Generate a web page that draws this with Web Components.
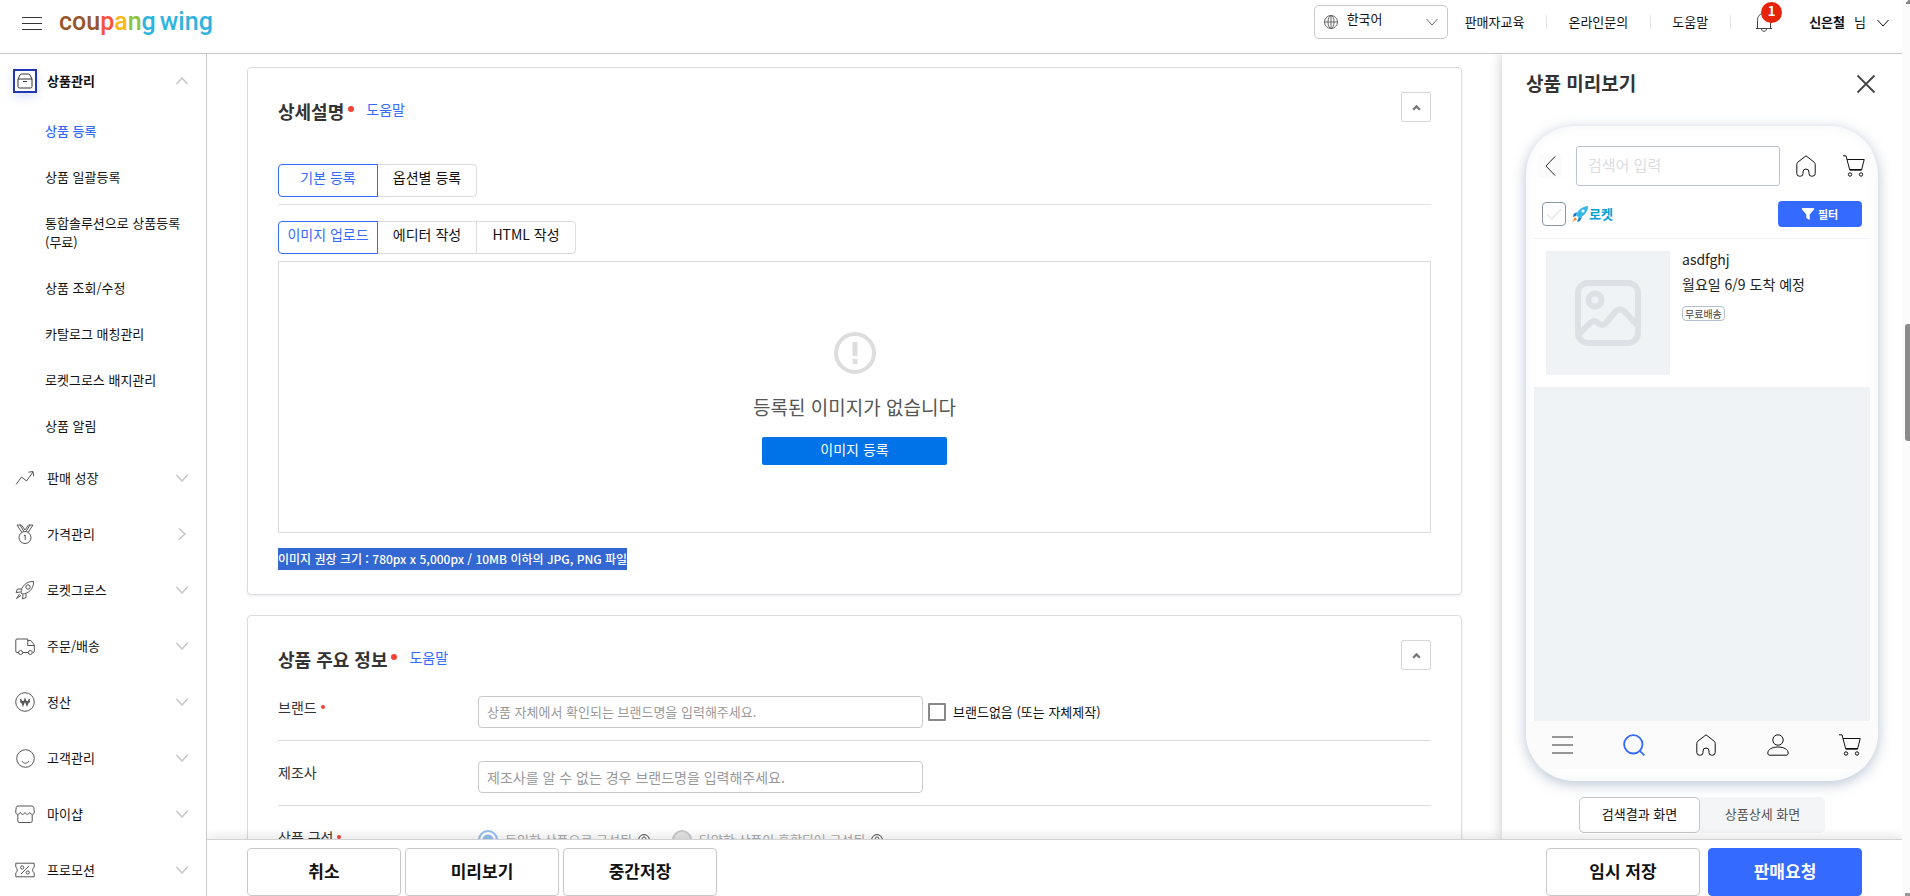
<!DOCTYPE html>
<html lang="ko">
<head>
<meta charset="utf-8">
<meta name="viewport" content="width=device-width, initial-scale=1">
<title>쿠팡 윙 - 상품 등록</title>
<style>
html, body { margin: 0; height: 100%; overflow: hidden; }
body { font-family: "Noto Sans CJK KR", "Noto Sans", sans-serif; font-size: 13px; line-height: 20px; color: #111; background: #fff; }
</style>
</head>
<body>
<wing-app></wing-app>
<script>
const define = (name, html, setup) => {
  const template = document.createElement('template');
  template.innerHTML = '<style>*{box-sizing:border-box}[hidden]{display:none}button,input,select{font:inherit;color:inherit;margin:0}a{color:inherit;text-decoration:none}</style>' + html;
  customElements.define(name, class extends HTMLElement {
    constructor() {
      super();
      this.attachShadow({ mode: 'open' }).append(template.content.cloneNode(true));
    }
    connectedCallback() { if (setup) setup(this, this.shadowRoot); }
  });
};

/* Icons, each in its own view box */
const ICONS = {
  menu: ['0 0 20 14', '<path d="M0 .5h20M0 6.500h20M0 12.500h20"/>'],
  down: ['0 0 12 8', '<path d="M.5 1 6 7l5.500-6"/>'],
  up: ['0 0 12 8', '<path d="M.5 7 6 1l5.500 6"/>'],
  right: ['0 0 8 12', '<path d="M1 .5 7 6 1 11.500"/>'],
  close: ['0 0 18 18', '<path d="m.5.5 17 17m0-17-17 17"/>'],
  back: ['0 0 12 22', '<path d="M11 .5 1 11l10 10.500"/>'],
  caret: ['0 0 8 6', '<path d="M1 5l3-3 3 3"/>'],
  globe: ['0 0 14 14', '<circle cx="7" cy="7" r="6.500"/><ellipse cx="7" cy="7" rx="3" ry="6.500"/><path d="M7 .5v13M.5 7h13"/>'],
  bell: ['0 0 18 21', '<path d="M1 17.500h16M2.500 17.500V9.500C2.500 5 5 2.500 9 2.500s6.500 2.500 6.500 7v8M7.500 2.500V1h3v1.500M6.500 18c.3 1.700 1.200 2.300 2.500 2.300s2.200-.6 2.500-2.300"/>'],
  box: ['0 0 16 16', '<path d="M1 6h14v7.500A1.500 1.500 0 0 1 13.500 15h-11A1.500 1.500 0 0 1 1 13.500zM1 6l2-4a2 2 0 0 1 1.700-1h6.600A2 2 0 0 1 13 2l2 4M6 8.500h4"/>'],
  trend: ['0 0 20 20', '<path d="M1 16.500 6.500 9l5 4 6.500-9M13.500 4.200 18 3.500l.7 4.800"/>'],
  medal: ['0 0 20 20', '<circle cx="10" cy="13.500" r="6"/><path d="m2 1 5 7.500M2 1h4.500L10 6l3.500-5H18l-5 7.500M5 1l4 6.500M15 1l-4 6.500M8.800 12l1.400-1v5"/>'],
  rocket: ['0 0 20 20', '<path d="M6 13C6 7 11 1 18.500 1.500 19 9 13 14 7 14zM6.500 9 2.500 9 1 12.500l4.500-.5M11 13.500v4L7.500 19 8 14.500M4.500 14 1.500 18.500l4.500-3"/><circle cx="13" cy="7" r="2.200"/>'],
  truck: ['0 0 20 20', '<path d="M3.500 16.500H2A1.200 1.200 0 0 1 .8 15.300V4.200A1.200 1.200 0 0 1 2 3h10.800v7M7.800 16.500h5.300M12.800 4.500h3l3.500 4.500v6.300a1.200 1.200 0 0 1-1.300 1.200M12.800 9.500h6.500"/><circle cx="5.600" cy="16.500" r="2"/><circle cx="15.300" cy="16.500" r="2"/>'],
  won: ['0 0 20 20', '<circle cx="10" cy="10" r="9.300"/><path stroke-width="1.500" d="M5.500 7 8 13l2-5.500L12 13l2.500-6M5 9.800h10"/>'],
  smile: ['0 0 20 20', '<circle cx="10.500" cy="10.500" r="8.800"/><path d="M7 13c1.500 3 5.500 3 7 0"/>'],
  shop: ['0 0 20 20', '<path d="M3 2h14a2 2 0 0 1 1.800 1.600L19.300 8c0 3-3.200 3-4.600.5C13.500 11 11.300 11 10 8.500 8.700 11 6.500 11 5.300 8.500 3.900 11 .7 11 .7 8l.5-4.400A2 2 0 0 1 3 2zM2.800 10.500V17A1.500 1.500 0 0 0 4.300 18.500h11.400a1.500 1.500 0 0 0 1.500-1.500v-6.500"/>'],
  coupon: ['0 0 20 20', '<path d="M.8 3.200h18.400v4c-2 .8-2 4.800 0 5.600v4H.8v-4c2-.8 2-4.800 0-5.600zM6 14l8-8"/><circle cx="7.200" cy="7.500" r="1.600"/><circle cx="12.800" cy="12.500" r="1.600"/>'],
  home: ['0 0 20 22', '<path d="M10 .8 1.600 7.400Q.8 8.200.8 9.500V18.600Q.8 21.200 3.500 21.200H4.500Q7 21.200 7 18.600V17a3 3 0 0 1 6 0v1.600q0 2.600 2.500 2.600h1q2.700 0 2.700-2.600V9.500q0-1.300-.8-2.100z"/>'],
  cart: ['0 0 22 22', '<path d="M0 .8h3L6.800 15.200H18.500L21.200 4.500H4M7 14.500h11.800"/><circle cx="7" cy="19.500" r="1.700"/><circle cx="18" cy="19.500" r="1.700"/>'],
  search: ['0 0 22 22', '<circle cx="10.300" cy="10.300" r="9.200"/><path d="m16.300 16.300 5 5"/>'],
  user: ['0 0 22 22', '<circle cx="11" cy="6" r="5.200"/><path d="M11 13c-6 0-10.200 2.500-10.200 6 0 1.500.7 2.200 2 2.200h16.400c1.300 0 2-.7 2-2.200 0-3.500-4.200-6-10.200-6z"/>'],
  bars: ['0 0 21 18', '<path d="M0 1h21M0 9h21M0 17h21"/>'],
  funnel: ['0 0 12 12', '<path fill="currentColor" stroke="none" d="M0 0h12v1.500L7.700 6.500V12L4.300 10V6.500L0 1.500z"/>'],
  check: ['0 0 16 12', '<path d="m.7 6 5 5L15.300 1"/>'],
  alert: ['0 0 44 44', '<circle cx="22" cy="22" r="19"/><path fill="currentColor" stroke="none" d="M19.500 11h5v14h-5zm0 17h5v5h-5z"/>'],
  help: ['0 0 12 12', '<circle cx="6" cy="6" r="5.400"/><path d="M4.200 4.800c0-2.400 3.600-2.400 3.600 0C7.800 6 6 6 6 7.500M6 8.400v1"/>'],
  picture: ['0 0 66 66', '<rect x="3" y="3" width="60" height="60" rx="10"/><circle cx="20" cy="20" r="6.500"/><path d="M3 55 15 43q4-4 8 0t8 0L40 32q5-5 10 0L63 46"/>'],
  ship: ['0 0 16 16', '<path fill="#35b9e9" stroke="none" d="M4 9C6 4 10 .5 16 0 16 6 12 10 7 12z"/><path fill="#1383c5" stroke="none" d="M5 6 1.500 8 1 11l3-1zM10 11l-2 4-3 1 1.500-4z"/><path fill="#ffa03a" stroke="none" d="M3 11 0 16l5-2.500z"/><path fill="#f26a3d" stroke="none" d="m3.500 12-2 2.800 2.800-1.500z"/><circle cx="11" cy="5" r="1.600" fill="#eaffff" stroke="none"/>']
};
define('wing-icon', `<style>
:host{display:block;flex:none;width:var(--w,20px);height:var(--h,var(--w,20px))}
svg{display:block;width:100%;height:100%;fill:none;stroke:currentColor;stroke-width:var(--stroke,1);overflow:visible}
</style><svg aria-hidden="true"></svg>`, (el, root) => {
  const [box, body] = ICONS[el.getAttribute('name')];
  const svg = root.querySelector('svg');
  svg.setAttribute('viewBox', box);
  svg.innerHTML = body;
});

define('wing-logo', `<style>
:host{display:block;font:500 25px/36px Roboto,sans-serif}
a{display:flex;gap:4px}
.c{color:#96562c}.p{color:#f5533d}.a{color:#fcb813}.n{color:#8bc53f}.g{color:#2fb4e0}
</style><a href="#" aria-label="coupang wing"><span><span class="c">cou</span><span class="p">p</span><span class="a">a</span><span class="n">n</span><span class="g">g</span></span><span class="g">wing</span></a>`);

define('wing-header', `<style>
:host{display:flex;align-items:center;height:54px;padding:0 13px 10px 22px;border-bottom:1px solid #c8c8c8;background:#fff}
button{border:0;background:none;padding:0;display:flex;align-items:center}
.menu{margin:4px 17px 0 0;color:#333}
nav{display:flex;align-items:center;margin-left:auto}
.lang{position:relative;display:flex;align-items:center;width:134px;height:34px;margin-right:17px}
.lang select{appearance:none;width:100%;height:100%;padding:0 30px 5px 32px;border:1px solid #c8c8c8;border-radius:5px;background:none;line-height:20px}
.lang wing-icon{position:absolute;pointer-events:none;color:#666}
.globe{left:10px;--w:14px}.arrow{right:10px;--w:12px;--h:8px}
.link{position:relative;padding-right:22px;margin-right:21px;border-right:1px solid #e4e4e4;line-height:14px}
.nav{display:flex;align-items:center}
.bell{position:relative;margin:0 36px 0 3px;color:#444}
.count{position:absolute;left:6px;top:-9px;width:21px;height:21px;border-radius:50%;background:#e52408;color:#fff;font-weight:700;line-height:18px;text-align:center}
.me{gap:9px}
.me wing-icon{margin:2px 0 0 2px}
</style>
<button class="menu" aria-label="메뉴"><wing-icon name="menu" style="--w:20px;--h:14px"></wing-icon></button>
<wing-logo></wing-logo>
<nav>
<div class="lang"><wing-icon class="globe" name="globe"></wing-icon><select aria-label="언어"><option>한국어</option><option>English</option></select><wing-icon class="arrow" name="down"></wing-icon></div>
<div class="nav">
<a class="link" href="#">판매자교육</a><a class="link" href="#">온라인문의</a><a class="link" href="#">도움말</a>
<button class="bell" aria-label="알림"><wing-icon name="bell" style="--w:18px;--h:21px"></wing-icon><span class="count">1</span></button>
<button class="me"><b>신은철</b><span>님</span><wing-icon name="down" style="--w:12px;--h:8px"></wing-icon></button>
</div></nav>`);

define('nav-group', `<style>
:host{display:block}
a{display:flex;align-items:center;height:56px;padding:0 18px 2px 13px}
.icon{display:grid;place-items:center;width:24px;height:24px;margin-right:10px;color:#555}
.chev{margin-left:auto;color:#c4c4c4;display:grid;place-items:center;width:12px}
:host([open]) a{font-weight:700}
:host([open]) .icon{border:2px solid #2437b5;box-shadow:0 4px 10px rgba(80,110,230,.2);color:#333}
</style><a href="#"><span class="icon"></span><slot name="label"></slot><span class="chev"></span></a><slot></slot>`, (el, root) => {
  const open = el.hasAttribute('open'), chev = el.getAttribute('chevron') || (open ? 'up' : 'down');
  root.querySelector('.icon').innerHTML = `<wing-icon name="${el.getAttribute('icon')}" style="--w:${open ? 16 : 20}px"></wing-icon>`;
  root.querySelector('.chev').innerHTML = `<wing-icon name="${chev}" style="--w:${chev === 'right' ? 8 : 12}px;--h:${chev === 'right' ? 12 : 8}px;--stroke:1.4"></wing-icon>`;
});

define('side-nav', `<style>
:host{display:block;width:207px;flex:none;border-right:1px solid #c8c8c8;overflow:hidden;background:#fff}
ul{list-style:none;margin:0;padding:0}
li{padding:11px 20px 16px 45px;line-height:19px}
.on{color:#346aff;font-weight:500}
</style>
<nav-group icon="box" open><span slot="label">상품관리</span>
<ul><li><a class="on" href="#">상품 등록</a></li><li><a href="#">상품 일괄등록</a></li><li><a href="#">통합솔루션으로 상품등록(무료)</a></li><li><a href="#">상품 조회/수정</a></li><li><a href="#">카탈로그 매칭관리</a></li><li><a href="#">로켓그로스 배지관리</a></li><li><a href="#">상품 알림</a></li></ul></nav-group>
<nav-group icon="trend"><span slot="label">판매 성장</span></nav-group>
<nav-group icon="medal" chevron="right"><span slot="label">가격관리</span></nav-group>
<nav-group icon="rocket"><span slot="label">로켓그로스</span></nav-group>
<nav-group icon="truck"><span slot="label">주문/배송</span></nav-group>
<nav-group icon="won"><span slot="label">정산</span></nav-group>
<nav-group icon="smile"><span slot="label">고객관리</span></nav-group>
<nav-group icon="shop"><span slot="label">마이샵</span></nav-group>
<nav-group icon="coupon"><span slot="label">프로모션</span></nav-group>`);

define('form-card', `<style>
:host{display:block;padding:24px 30px;border:1px solid #dcdcdf;border-radius:4px;background:#fff;box-shadow:0 2px 3px rgba(40,50,90,.06)}
header{display:flex;align-items:flex-start;height:35px}
h2{margin:4px 0 0;font-size:18px;line-height:30px;font-weight:700;color:#333}
.dot{width:6px;height:6px;margin:14px 12px 0 4px;border-radius:50%;background:#f44336}
a{margin-top:6px;font-size:14px;line-height:22px;color:#346aff}
button{display:grid;place-items:center;width:30px;height:30px;margin-left:auto;border:1px solid #d5d5da;border-radius:2px;background:#fff;color:#777;padding:0}
</style><header><h2><slot name="title"></slot></h2><span class="dot"></span><a href="#">도움말</a><button aria-label="접기"><wing-icon name="caret" style="--w:9px;--h:7px;--stroke:2"></wing-icon></button></header><slot></slot>`);

define('tab-set', `<style>
:host{display:flex;font-size:14px}
button{width:100px;height:33px;padding:0 0 7px;border:1px solid #dcdcdf;background:#fff;margin-left:-1px;line-height:22px;white-space:nowrap}
button:first-child{margin-left:0;border-radius:4px 0 0 4px}
button:last-child{border-radius:0 4px 4px 0}
.on{border-color:#346aff;color:#346aff;position:relative}
</style><div role="tablist" style="display:flex"></div>`, (el, root) => {
  root.querySelector('div').innerHTML = el.getAttribute('tabs').split('|').map((t, i) => `<button role="tab" aria-selected="${!i}"${i ? '' : ' class="on"'}>${t}</button>`).join('');
});

define('form-row', `<style>
:host{display:flex;align-items:flex-start;padding:20px 0 12px;border-bottom:1px solid #dcdcdf}
.label{display:flex;align-items:center;gap:4px;width:200px;flex:none;font-size:14px;line-height:22px;color:#333}
.dot{display:none;width:4px;height:4px;border-radius:50%;background:#f44336}
:host([required]) .dot{display:block}
.field{display:flex;align-items:center;flex:1;min-width:0}
</style><div class="label"><slot name="label"></slot><span class="dot"></span></div><div class="field"><slot></slot></div>`);

define('product-form', `<style>
:host{display:block;flex:1;min-width:0;overflow:hidden;padding:13px 40px 0}
form-card + form-card{margin-top:20px}
.rule{border:0;border-top:1px solid #e0e3ea;margin:7px 0 16px}
tab-set.mode{margin-top:37px}
.drop{display:flex;flex-direction:column;align-items:center;margin-top:7px;padding:69px 0 67px;border:1px solid #dcdcdf}
.drop wing-icon{--w:44px;--stroke:4;color:#ddd}
.drop p{margin:18px 0 16px;font-size:19px;line-height:28px;color:#555}
.drop button{width:185px;height:28px;padding:0 0 4px;border:0;border-radius:2px;background:#0073e9;color:#fff;font-size:14px;line-height:22px}
.hint{display:table;margin:15px 0 0;background:#3367d1;color:#fff;font-size:12px;font-weight:500;line-height:22px}
.info{padding-bottom:60px}
.rows{margin-top:1px}
input[type=text]{width:445px;height:32px;padding:0 8px 2px;border:1px solid #c8c8c8;border-radius:4px;background:#fff}
input::placeholder{color:#999;opacity:1}
#maker{font-size:14px;padding-bottom:0}
input[type=checkbox]{appearance:none;width:18px;height:18px;margin:0 7px 0 5px;border:2px solid #888;border-radius:1px;background:#fff}
.radio{display:flex;align-items:center;height:28px;color:#aaa}
.radio input{appearance:none;width:20px;height:20px;margin:0 7px 0 0;border:2px solid #c8c8c8;border-radius:50%;background:#e4e4e4}
.radio input:checked{border-color:#94bfee;background:radial-gradient(circle,#94bfee 5px,#fff 6px)}
.radio wing-icon{--w:12px;margin:0 22px 0 6px;color:#444}
</style>
<form-card><span slot="title">상세설명</span>
<tab-set class="mode" tabs="기본 등록|옵션별 등록"></tab-set>
<hr class="rule">
<tab-set tabs="이미지 업로드|에디터 작성|HTML 작성"></tab-set>
<div class="drop"><wing-icon name="alert"></wing-icon><p>등록된 이미지가 없습니다</p><button>이미지 등록</button></div>
<p class="hint">이미지 권장 크기 : 780px x 5,000px / 10MB 이하의 JPG, PNG 파일</p>
</form-card>
<form-card class="info"><span slot="title">상품 주요 정보</span>
<div class="rows">
<form-row required><label slot="label" for="brand">브랜드</label><input type="text" id="brand" placeholder="상품 자체에서 확인되는 브랜드명을 입력해주세요."><input type="checkbox" id="nobrand"><label for="nobrand">브랜드없음 (또는 자체제작)</label></form-row>
<form-row><label slot="label" for="maker">제조사</label><input type="text" id="maker" placeholder="제조사를 알 수 없는 경우 브랜드명을 입력해주세요."></form-row>
<form-row required><span slot="label">상품 구성</span><span class="radio"><input type="radio" name="set" id="same" checked disabled><label for="same">동일한 상품으로 구성됨</label><wing-icon name="help"></wing-icon></span><span class="radio"><input type="radio" name="set" id="mixed" disabled><label for="mixed">다양한 상품이 혼합되어 구성됨</label><wing-icon name="help"></wing-icon></span></form-row>
</div></form-card>`);

define('phone-mock', `<style>
:host{display:block;height:655px;padding-bottom:12px;border-radius:48px;background:#fff;box-shadow:0 3px 14px rgba(100,125,155,.45),inset 0 0 12px rgba(150,165,190,.12);overflow:hidden}
button{border:0;background:none;padding:0}
.find{display:flex;align-items:center;padding:20px 13px 0 12px;color:#111}
.back{display:grid;place-items:center;width:24px;height:24px;background:#fbfbfb;margin-right:14px}
.find input{flex:1;min-width:0;height:40px;padding:0 11px 3px;border:1px solid #b9c3d2;border-radius:3px;background:#fff;font-size:15px;line-height:24px}
.find input::placeholder{color:#dadde2;opacity:1}
.home{margin:0 27px 0 16px}
.opts{display:flex;align-items:center;height:53px;margin:0 8px;padding:3px 8px 0;border-bottom:1px solid #eef2f6;color:#00a0d2;font-weight:700}
.opts label{display:flex;align-items:center}
.tick{position:relative;display:grid;place-items:center;width:24px;height:24px;margin-right:6px;color:#e2e7ec}
.tick input{position:absolute;inset:0;width:24px;height:24px;appearance:none;border:1px solid #8794aa;border-radius:4px}
.ship{margin-right:1px}
.filter{display:flex;align-items:center;justify-content:center;gap:4px;width:84px;height:26px;margin-left:auto;border-radius:4px;background:#346aff;color:#fff;font-size:11px}
.item{display:flex;gap:12px;padding:12px 20px;font-size:14px;line-height:25px;color:#222}
.item section{margin-top:-4px}
.pic{display:grid;place-items:center;width:124px;height:124px;background:#eff3f6;color:#dde1e6}
p{margin:0}
.free{display:table;margin-top:9px;padding:0 2px;border:1px solid #b4c0d0;border-radius:4px;font-size:10px;line-height:13px;color:#444}
.blank{height:334px;margin:0 8px;background:#eff3f6}
nav{display:flex;justify-content:space-between;align-items:center;height:48px;padding:0 16px 0 24px;background:#fbfbfb}
nav a{display:grid;place-items:center;width:24px;color:#111}
</style>
<div class="find"><button class="back" aria-label="뒤로"><wing-icon name="back" style="--w:11px;--h:20px"></wing-icon></button><input type="text" aria-label="검색" placeholder="검색어 입력"><wing-icon class="home" name="home" style="--w:20px;--h:22px"></wing-icon><wing-icon name="cart" style="--w:22px"></wing-icon></div>
<div class="opts"><label><span class="tick"><input type="checkbox"><wing-icon name="check" style="--w:16px;--h:12px;--stroke:1.5"></wing-icon></span><wing-icon class="ship" name="ship" style="--w:16px"></wing-icon>로켓</label><button class="filter"><wing-icon name="funnel" style="--w:12px"></wing-icon>필터</button></div>
<div class="item"><div class="pic"><wing-icon name="picture" style="--w:66px;--stroke:6"></wing-icon></div><section><p>asdfghj</p><p>월요일 6/9 도착 예정</p><span class="free">무료배송</span></section></div>
<div class="blank"></div>
<nav><a href="#" aria-label="메뉴"><wing-icon name="bars" style="--w:21px;--h:18px;--stroke:1.6;color:#777"></wing-icon></a><a href="#" aria-label="검색"><wing-icon name="search" style="--w:22px;--stroke:1.8;color:#346aff"></wing-icon></a><a href="#" aria-label="홈"><wing-icon name="home" style="--w:20px;--h:22px"></wing-icon></a><a href="#" aria-label="마이"><wing-icon name="user" style="--w:22px"></wing-icon></a><a href="#" aria-label="장바구니"><wing-icon name="cart" style="--w:22px"></wing-icon></a></nav>`);

define('product-preview', `<style>
:host{display:block;position:relative;width:400px;flex:none;padding:0 24px;background:#fff;box-shadow:-2px 0 10px rgba(0,0,0,.16)}
header{display:flex;justify-content:space-between;align-items:center;height:58px;padding-right:3px;margin-bottom:14px}
h2{margin:0;font-size:19px;line-height:28px;font-weight:700;color:#333}
header button{border:0;background:none;padding:1px 0 0;color:#444}
.views{display:flex;width:246px;margin:16px auto 0;border-radius:5px;background:#f3f5f7}
.views button{flex:1;height:36px;padding:0 0 2px;border:1px solid transparent;border-radius:5px;background:none;color:#555}
.views .on{flex:none;width:121px;background:#fff;border-color:#c8c8c8;color:#111}
</style><header><h2>상품 미리보기</h2><button aria-label="닫기"><wing-icon name="close" style="--w:18px;--stroke:1.8"></wing-icon></button></header>
<phone-mock></phone-mock>
<div class="views"><button class="on">검색결과 화면</button><button>상품상세 화면</button></div>`);

define('action-bar', `<style>
:host{display:flex;position:relative;gap:4px;padding:8px 40px 0;border-top:1px solid #d2d2d2;background:#fff;box-shadow:0 -3px 10px rgba(0,0,0,.1)}
button{width:154px;height:48px;padding:0 0 2px;border:1px solid #c8c8c8;border-radius:4px;background:#fff;font-size:17px;font-weight:700;line-height:26px}
.draft{margin-left:auto}
.main{margin-left:4px;border-color:#346aff;background:#346aff;color:#fff}
</style><button>취소</button><button>미리보기</button><button>중간저장</button><button class="draft">임시 저장</button><button class="main">판매요청</button>`);

define('scroll-rail', `<style>
:host{display:flex;flex-direction:column;align-items:flex-end;width:8px;flex:none;background:#fbfbfb;overflow:hidden}
i{width:5px;height:3px;background:#999}
.top{height:4px;background:linear-gradient(125deg,transparent 40%,#8a8a8a 42%)}
.track{display:flex;flex:1;flex-direction:column}
.track::before{content:"";flex:320}
.track::after{content:"";flex:452}
.thumb{height:117px;border-radius:3px 0 0 3px;background:#8a8a8a}
</style><i class="top"></i><div class="track"><i class="thumb"></i></div><i></i>`);

define('wing-app', `<style>
:host{display:flex;height:100vh}
.page{display:flex;flex-direction:column;flex:1;min-width:0}
.body,.work{display:flex;flex:1;min-height:0}
.stage{display:flex;flex-direction:column;flex:1;min-width:0;overflow:hidden}
.work{overflow:hidden}
</style><div class="page"><wing-header></wing-header><div class="body"><side-nav></side-nav><div class="stage"><div class="work"><product-form></product-form><product-preview></product-preview></div><action-bar></action-bar></div></div></div><scroll-rail></scroll-rail>`);
</script>
</body>
</html>
